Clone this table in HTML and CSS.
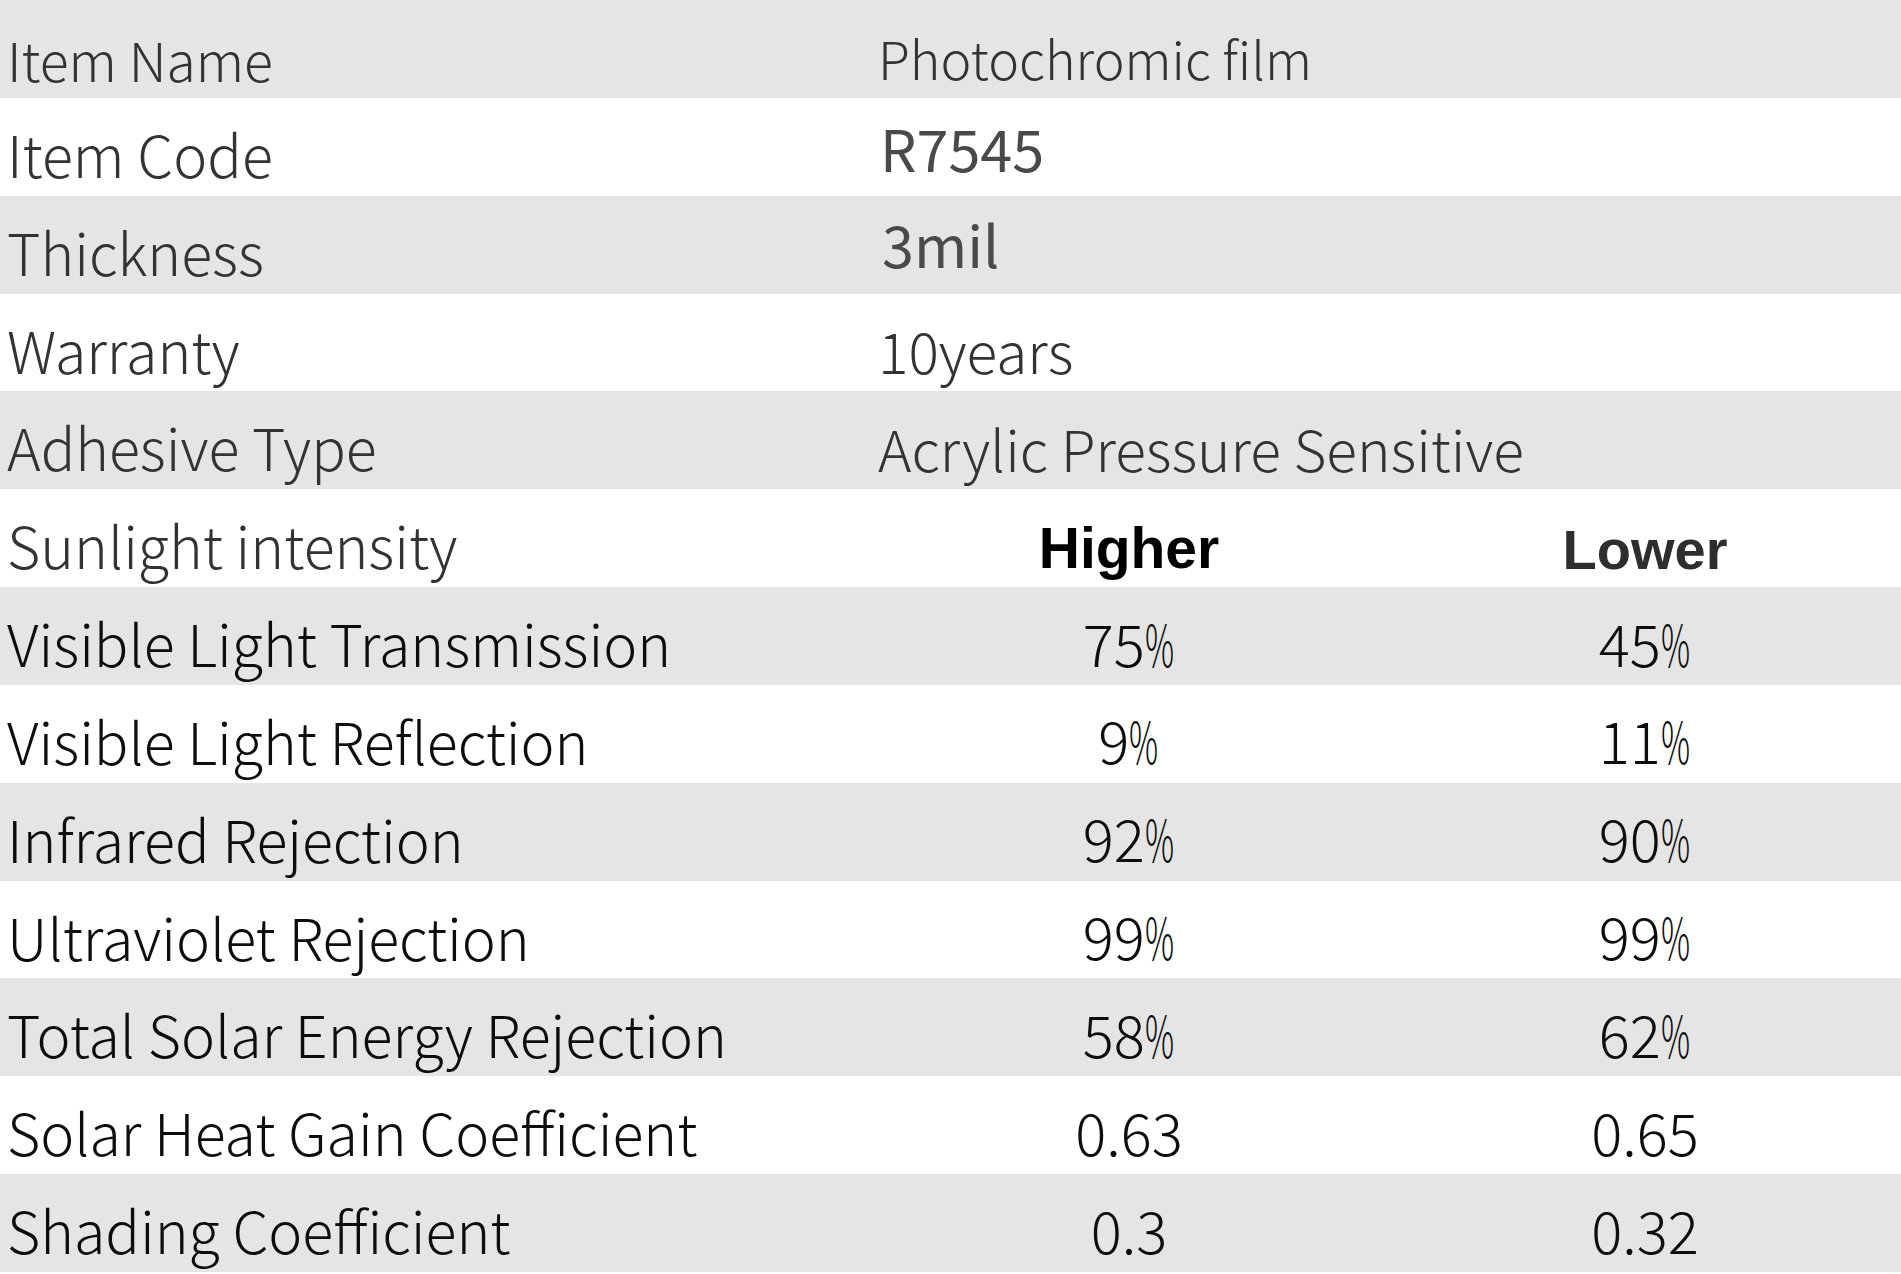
FILE: index.html
```html
<!DOCTYPE html>
<html lang="en">
<head>
<meta charset="utf-8">
<title>Photochromic film R7545</title>
<link rel="stylesheet" href="styles.css">
</head>
<body>
<div class="spec">
  <div class="row gray first">
    <div class="label">Item Name</div>
    <div class="value wide">Photochromic film</div>
  </div>
  <div class="row">
    <div class="label">Item Code</div>
    <div class="value wide code">R7545</div>
  </div>
  <div class="row gray">
    <div class="label">Thickness</div>
    <div class="value wide code mil">3mil</div>
  </div>
  <div class="row">
    <div class="label">Warranty</div>
    <div class="value wide">10years</div>
  </div>
  <div class="row gray">
    <div class="label">Adhesive Type</div>
    <div class="value wide">Acrylic Pressure Sensitive</div>
  </div>
  <div class="row">
    <div class="label">Sunlight intensity</div>
    <div class="head higher">Higher</div>
    <div class="head lower">Lower</div>
  </div>
  <div class="row gray data">
    <div class="label">Visible Light Transmission</div>
    <div class="num">75<span class="pct">%</span></div>
    <div class="num">45<span class="pct">%</span></div>
  </div>
  <div class="row data">
    <div class="label">Visible Light Reflection</div>
    <div class="num">9<span class="pct">%</span></div>
    <div class="num">11<span class="pct">%</span></div>
  </div>
  <div class="row gray data">
    <div class="label">Infrared Rejection</div>
    <div class="num">92<span class="pct">%</span></div>
    <div class="num">90<span class="pct">%</span></div>
  </div>
  <div class="row data">
    <div class="label">Ultraviolet Rejection</div>
    <div class="num">99<span class="pct">%</span></div>
    <div class="num">99<span class="pct">%</span></div>
  </div>
  <div class="row gray data">
    <div class="label">Total Solar Energy Rejection</div>
    <div class="num">58<span class="pct">%</span></div>
    <div class="num">62<span class="pct">%</span></div>
  </div>
  <div class="row data">
    <div class="label">Solar Heat Gain Coefficient</div>
    <div class="num">0.63</div>
    <div class="num">0.65</div>
  </div>
  <div class="row gray data">
    <div class="label">Shading Coefficient</div>
    <div class="num">0.3</div>
    <div class="num">0.32</div>
  </div>
</div>
</body>
</html>
```
FILE: styles.css
```css
html, body {
  margin: 0;
  padding: 0;
  background: #ffffff;
}

.spec {
  width: 1901px;
  display: flex;
  flex-direction: column;
  font-family: "Noto Sans CJK SC", "Noto Sans", sans-serif;
  font-weight: 300;
}

.row {
  height: 97.85px;
  display: grid;
  grid-template-columns: 869px 520px 512px;
  background: #ffffff;
  color: #333333;
  white-space: nowrap;
}

.row.gray {
  background: #e5e5e5;
}

.label {
  padding-left: 7px;
  font-size: 57.3px;
  line-height: 57.3px;
  padding-top: 27px;
}

.value {
  padding-left: 9px;
  font-size: 56.8px;
  line-height: 56.8px;
  padding-top: 27.5px;
}

.value.wide {
  grid-column: 2 / 4;
}

.first .label {
  font-size: 53.5px;
  line-height: 53.5px;
  padding-top: 31.5px;
}

.first .value {
  font-size: 52px;
  line-height: 52px;
  padding-top: 31.5px;
}

.value.code {
  font-weight: 400;
  font-size: 57.5px;
  line-height: 57.5px;
  padding-top: 21px;
  padding-left: 11px;
  color: #4a4a4a;
}

.value.code.mil {
  padding-top: 19px;
  padding-left: 13px;
}

.head {
  font-family: "Liberation Sans", Arial, sans-serif;
  font-weight: 700;
  text-align: center;
}

.higher {
  font-size: 57px;
  line-height: 57px;
  padding-top: 31px;
  color: #000000;
}

.lower {
  font-size: 56px;
  line-height: 56px;
  padding-top: 32.5px;
  color: #2e2e2e;
}

.data {
  color: #0d0d0d;
}

.num {
  text-align: center;
  font-size: 58px;
  line-height: 58px;
  padding-top: 25.5px;
}

.pct {
  display: inline-block;
  transform: scaleX(0.56);
  transform-origin: left center;
  margin-right: -0.37em;
}
```
